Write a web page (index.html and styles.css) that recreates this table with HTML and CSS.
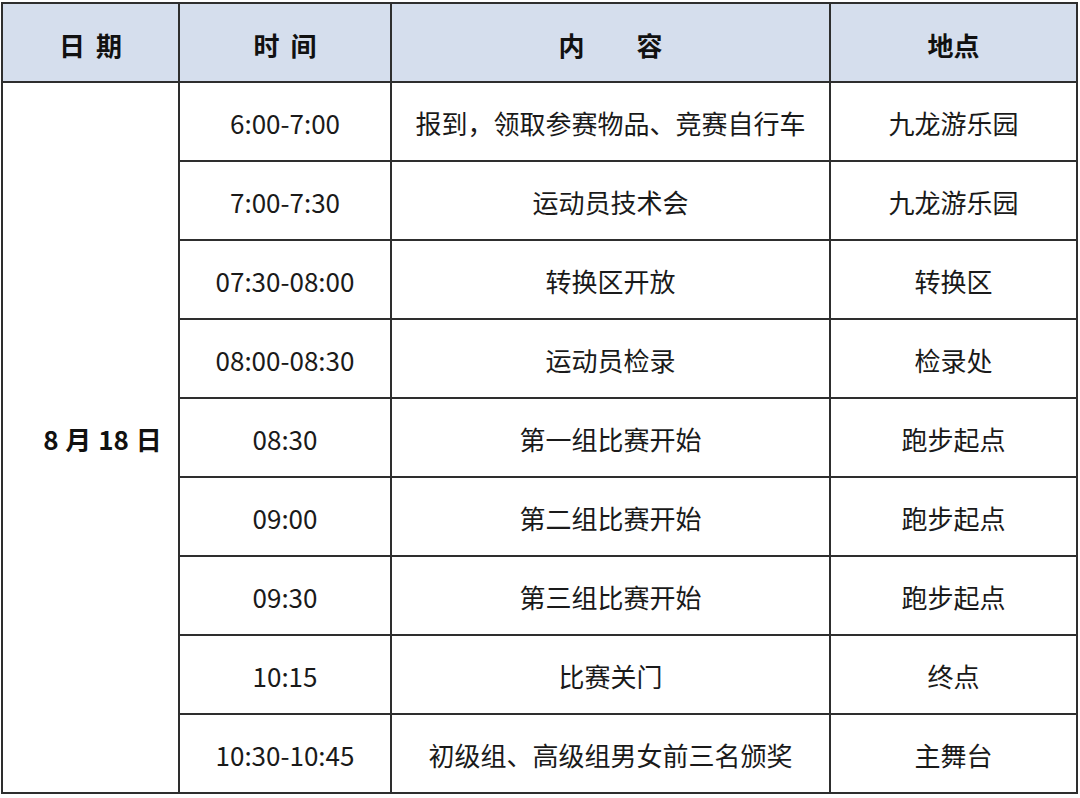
FILE: index.html
```html
<!DOCTYPE html>
<html lang="zh-CN">
<head>
<meta charset="utf-8">
<link rel="stylesheet" href="styles.css">
</head>
<body>
<div class="wrap">
<table class="schedule">
  <colgroup>
    <col class="c-date">
    <col class="c-time">
    <col class="c-content">
    <col class="c-place">
  </colgroup>
  <thead>
    <tr>
      <th class="spaced">日 期</th>
      <th class="spaced">时 间</th>
      <th>内&emsp;&emsp;容</th>
      <th>地点</th>
    </tr>
  </thead>
  <tbody>
    <tr>
      <td class="date" rowspan="9">8 月 18 日</td>
      <td>6:00-7:00</td>
      <td>报到，领取参赛物品、竞赛自行车</td>
      <td>九龙游乐园</td>
    </tr>
    <tr><td>7:00-7:30</td><td>运动员技术会</td><td>九龙游乐园</td></tr>
    <tr><td>07:30-08:00</td><td>转换区开放</td><td>转换区</td></tr>
    <tr><td>08:00-08:30</td><td>运动员检录</td><td>检录处</td></tr>
    <tr><td>08:30</td><td>第一组比赛开始</td><td>跑步起点</td></tr>
    <tr><td>09:00</td><td>第二组比赛开始</td><td>跑步起点</td></tr>
    <tr><td>09:30</td><td>第三组比赛开始</td><td>跑步起点</td></tr>
    <tr><td>10:15</td><td>比赛关门</td><td>终点</td></tr>
    <tr><td>10:30-10:45</td><td>初级组、高级组男女前三名颁奖</td><td>主舞台</td></tr>
  </tbody>
</table>
</div>
</body>
</html>
```
FILE: styles.css
```css
html, body {
  margin: 0;
  padding: 0;
  background: #ffffff;
}
.wrap {
  padding: 2px 0 0 1px;
}
.schedule {
  border-collapse: collapse;
  table-layout: fixed;
  width: 1077px;
  font-family: "Noto Sans CJK SC", "Noto Sans", sans-serif;
  color: #1a1a1a;
}
.c-date { width: 177px; }
.c-time { width: 212px; }
.c-content { width: 439px; }
.c-place { width: 247px; }
.schedule th,
.schedule td {
  border: 2px solid #2e2e2e;
  text-align: center;
  vertical-align: middle;
  padding: 0;
  height: 79px;
  box-sizing: border-box;
}
.schedule th {
  background: #d5deed;
  font-weight: 700;
  font-size: 26px;
  color: #111111;
  line-height: 1;
  padding-top: 4px;
}
.schedule th.spaced {
  word-spacing: 5px;
}
.schedule td {
  font-size: 26px;
  font-weight: 400;
  padding-top: 2px;
}
.schedule td.date {
  font-weight: 700;
  font-size: 26px;
  color: #111111;
  word-spacing: 1px;
  padding-left: 24px;
}
```
